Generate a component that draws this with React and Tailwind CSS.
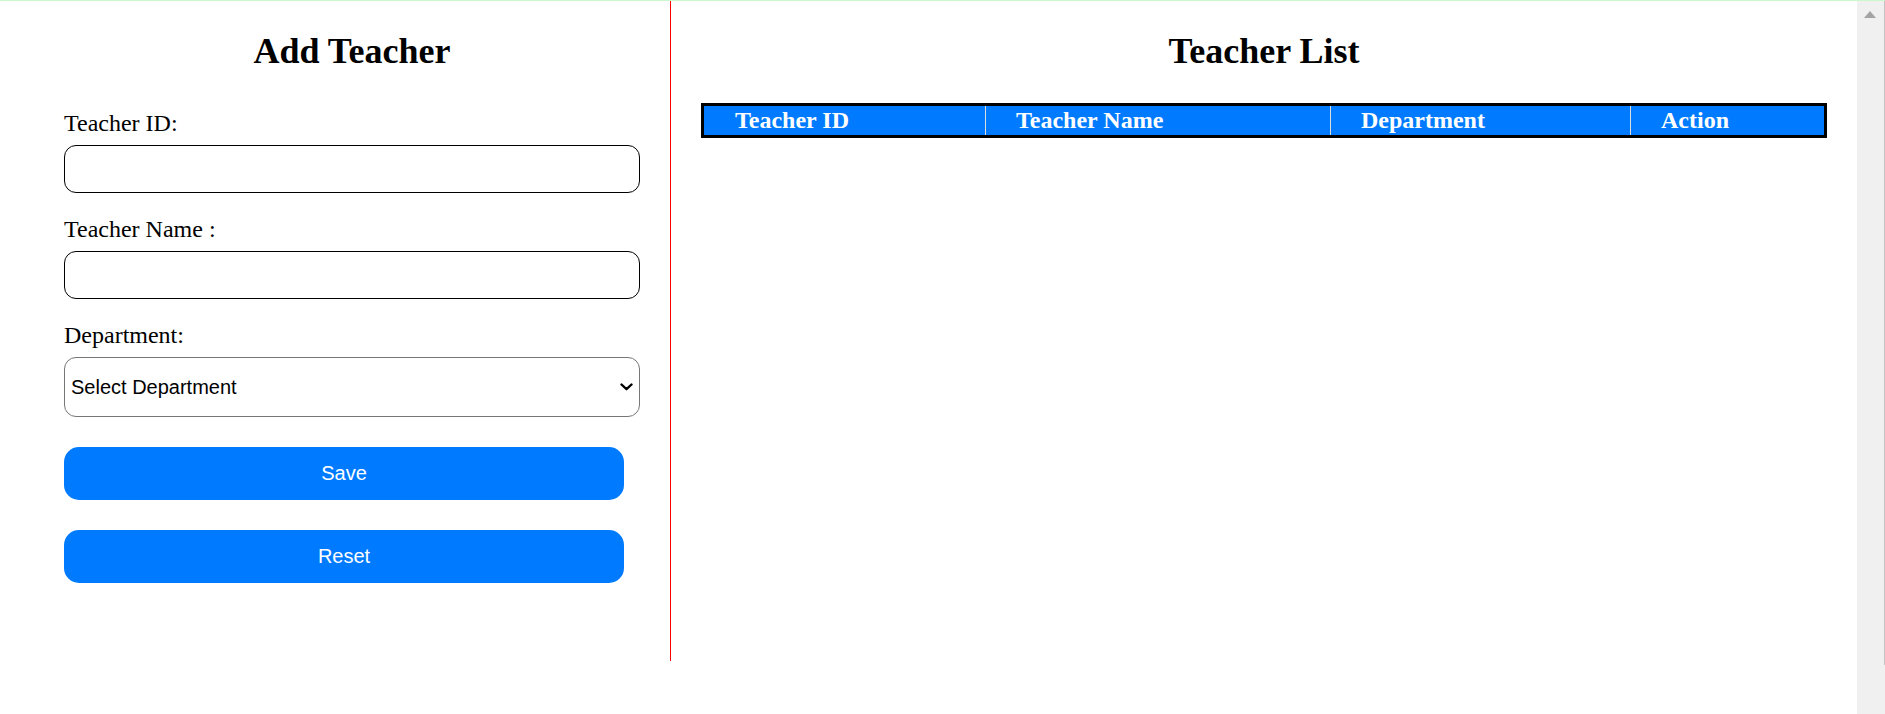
import React from "react";

function Field({ label, first }) {
  return (
    <>
      <label className={`block ${first ? "mt-[38px]" : "mt-[22px]"} text-[24px] leading-[28px]`}>{label}</label>
      <input
        type="text"
        className="block mt-[8px] w-[576px] h-[48px] border border-black rounded-[12px] px-2 outline-none bg-white"
      />
    </>
  );
}

export default function App() {
  const headers = [
    { label: "Teacher ID", cls: "w-[281px] pl-[31px]" },
    { label: "Teacher Name", cls: "w-[345px] pl-[30px] border-l border-[#dcdcdc]" },
    { label: "Department", cls: "w-[300px] pl-[30px] border-l border-[#dcdcdc]" },
    { label: "Action", cls: "flex-1 pl-[30px] border-l border-[#dcdcdc]" },
  ];
  return (
    <div className="h-[714px] w-full overflow-hidden bg-white flex flex-col font-['Liberation_Serif',serif] text-black">
      <div className="h-px w-full shrink-0 bg-[#ccf7cc]" />
      <div className="flex flex-1 min-h-0">
        <div className="flex flex-1 items-start">
          <section className="w-[671px] h-[660px] shrink-0 border-r border-[#ff0000] pl-[64px] pt-[30px]">
            <form className="w-[576px]" onSubmit={(e) => e.preventDefault()}>
              <h2 className="text-[36px] leading-[40px] font-bold text-center">Add Teacher</h2>
              <Field label="Teacher ID:" first />
              <Field label="Teacher Name :" />
              <label className="block mt-[22px] text-[24px] leading-[28px]">Department:</label>
              <div className="relative mt-[8px] w-[576px] h-[60px]">
                <select className="appearance-none w-full h-full border border-[#767676] rounded-[12px] pl-[6px] pr-8 bg-white text-[20px] font-['Liberation_Sans',Arial,sans-serif] text-black outline-none">
                  <option>Select Department</option>
                </select>
                <svg
                  className="absolute right-[7px] top-[26px] pointer-events-none"
                  width="13"
                  height="8"
                  viewBox="0 0 13 8"
                >
                  <path d="M1.5 1.5 L6.5 6.2 L11.5 1.5" fill="none" stroke="#000" strokeWidth="2.4" strokeLinecap="round" strokeLinejoin="round" />
                </svg>
              </div>
              <button
                type="button"
                className="block mt-[30px] w-[560px] h-[53px] rounded-[15px] bg-[#007bff] text-white text-[20px] leading-[51px] font-['Liberation_Sans',Arial,sans-serif]"
              >
                Save
              </button>
              <button
                type="button"
                className="block mt-[30px] w-[560px] h-[53px] rounded-[15px] bg-[#007bff] text-white text-[20px] leading-[51px] font-['Liberation_Sans',Arial,sans-serif]"
              >
                Reset
              </button>
            </form>
          </section>
          <section className="flex-1 px-[30px] pt-[30px]">
            <h2 className="text-[36px] leading-[40px] font-bold text-center">Teacher List</h2>
            <div className="mt-[32px] border-[3px] border-black bg-[#007bff] flex h-[35px]">
              {headers.map((h) => (
                <div
                  key={h.label}
                  className={`${h.cls} h-[29px] text-white text-[24px] leading-[29px] font-bold text-left whitespace-nowrap`}
                >
                  {h.label}
                </div>
              ))}
            </div>
          </section>
        </div>
        <div className="w-[28px] shrink-0 flex">
          <div className="w-[27px] bg-[#f0f0f0] pt-[10px] pl-[7px]">
            <svg width="12" height="7" viewBox="0 0 12 7">
              <path d="M6 0 L12 7 L0 7 Z" fill="#a3a3a3" />
            </svg>
          </div>
          <div className="w-px flex flex-col">
            <div className="h-[664px] bg-[#c4c4c4]" />
            <div className="flex-1 bg-[#f0f0f0]" />
          </div>
        </div>
      </div>
    </div>
  );
}
